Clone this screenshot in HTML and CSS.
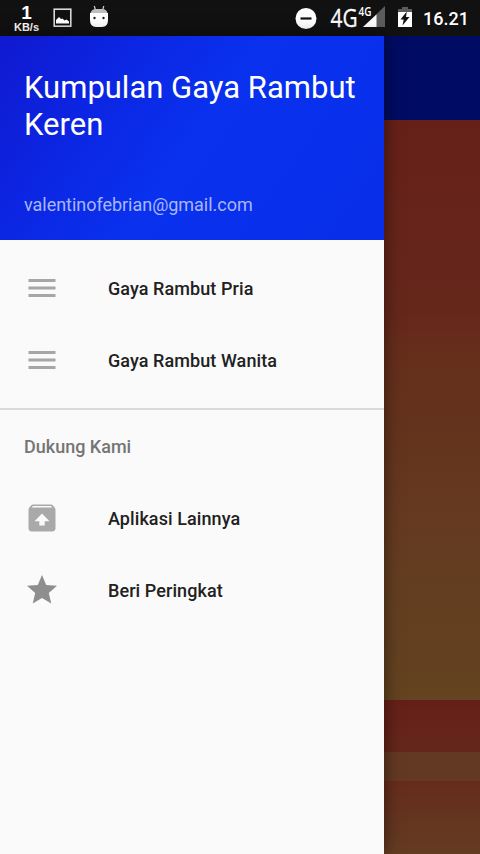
FILE: index.html
```html
<!DOCTYPE html>
<html lang="id">
<head>
<meta charset="utf-8">
<title>Kumpulan Gaya Rambut Keren</title>
<link rel="stylesheet" href="styles.css">
</head>
<body>
<header class="status">
  <div class="speed"><span class="speed-value">1</span><span class="speed-unit">KB/s</span></div>
  <svg class="picture" width="20" height="20" viewBox="0 0 20 20"><rect x="1.2" y="1.2" width="16.6" height="17" fill="none" stroke="#d8dad8" stroke-width="1.6"/><path d="M3 15.500V12l3-3 2 2 1.500-.5 2 2 2-1 2.500 2v2z" fill="#fff"/></svg>
  <svg class="robot" width="20" height="24" viewBox="0 0 20 24"><path d="M5.300 1l1.200 4M14.800 1l-1.200 4" stroke="#ccc" stroke-width="1.200"/><path d="M1.500 8.500Q2 4 7 4h6q5 0 5.500 4.500z" fill="#bdbdbd"/><path d="M1 8h18v7q0 7-6 7H7q-6 0-6-7z" fill="#fff"/><circle cx="5.500" cy="13" r="1.200" fill="#222"/><circle cx="14.500" cy="13" r="1.200" fill="#222"/></svg>
  <span class="spacer"></span>
  <svg class="dnd" width="22" height="22" viewBox="0 0 22 22"><circle cx="11" cy="10.500" r="10.500" fill="#fff"/><path d="M5.500 10.500h11" stroke="#111" stroke-width="2.200"/></svg>
  <svg class="signal" width="56" height="26" viewBox="0 0 56 26"><path d="M55 1v21H33z" fill="#5c5c5c"/><path d="M46.500 9.500V22H33z" fill="#fff"/><text class="net" x="0.500" y="22" textLength="27" lengthAdjust="spacingAndGlyphs">4G</text><text class="net-small" x="28.500" y="10.500" textLength="13" lengthAdjust="spacingAndGlyphs">4G</text></svg>
  <svg class="battery" width="16" height="22" viewBox="0 0 16 22"><path d="M1 6V3h4V1h6v2h4v3z" fill="#5c5c5c"/><path d="M1 6h14v15H1z" fill="#fff"/><path d="M9.800 5.500L3.500 13.500h3.200L5.500 19.500 12.500 11H9z" fill="#111"/></svg>
  <time class="clock">16.21</time>
</header>
<main class="screen">
  <aside class="drawer">
    <section class="account">
      <h1>Kumpulan Gaya Rambut Keren</h1>
      <p>valentinofebrian@gmail.com</p>
    </section>
    <nav>
      <ul class="menu">
        <li><svg class="icon" viewBox="0 0 36 36"><path d="M4.500 10.500h27M4.500 18h27M4.500 25.500h27" stroke="#a6a6a6" stroke-width="3"/></svg>Gaya Rambut Pria</li>
        <li><svg class="icon" viewBox="0 0 36 36"><path d="M4.500 10.500h27M4.500 18h27M4.500 25.500h27" stroke="#a6a6a6" stroke-width="3"/></svg>Gaya Rambut Wanita</li>
      </ul>
      <h2>Dukung Kami</h2>
      <ul class="menu">
        <li><svg class="icon" viewBox="0 0 24 24"><path fill="#a9a9a9" fill-rule="evenodd" d="M20.550 5.220l-1.390-1.680C18.880 3.210 18.470 3 18 3H6c-.47 0-.88.210-1.150.550L3.460 5.220C3.170 5.570 3 6.010 3 6.500V19c0 1.100.890 2 2 2h14c1.100 0 2-.9 2-2V6.500c0-.49-.17-.93-.45-1.280zM12 9l5 5.200h-3.200V17h-3.600v-2.800H7zM5.120 5l.82-1h12l.93 1z"/></svg>Aplikasi Lainnya</li>
        <li><svg class="icon" viewBox="0 0 24 24"><path fill="#8e8e8e" d="M12 17.270L18.180 21l-1.640-7.030L22 9.240l-7.190-.61L12 2 9.190 8.630 2 9.240l5.460 4.730L5.820 21z"/></svg>Beri Peringkat</li>
      </ul>
    </nav>
  </aside>
  <div class="backdrop"><div class="toolbar"></div><div class="card"></div><div class="card-next"></div><div class="band"></div><div class="last"></div></div>
</main>
</body>
</html>
```
FILE: styles.css
```css
* { box-sizing: border-box; }
body { margin: 0; width: 480px; height: 854px; overflow: hidden; font-family: Roboto, "Liberation Sans", sans-serif; background: #fafafa; }
h1, h2, p, ul { margin: 0; padding: 0; }
svg { display: block; flex: none; }
.status { height: 36px; display: flex; align-items: flex-start; background: #111; color: #fff; }
.speed { width: 27px; margin: 3px 0 0 13px; display: flex; flex-direction: column; align-items: center; font-family: "Liberation Sans", sans-serif; font-weight: 700; }
.speed-value { font-size: 19px; line-height: 19px; }
.speed-unit { font-size: 11px; line-height: 11px; }
.picture { margin: 8px 0 0 13px; }
.robot { margin: 5px 0 0 16px; }
.spacer { flex: 1; }
.dnd { margin: 8px 13px 0 0; }
.signal { margin: 5px 11px 0 0; overflow: visible; }
.net { font: 400 25px "Open Sans", Roboto, sans-serif; fill: #fff; stroke: #fff; stroke-width: .3px; }
.net-small { font: 600 12px "Open Sans", Roboto, sans-serif; fill: #fff; }
.battery { margin: 6px 10px 0 0; }
.clock { width: 57px; padding-top: 8px; font-size: 18px; line-height: 21px; font-weight: 500; }
.screen { display: grid; grid-template-columns: 384px 96px; height: 818px; }
.drawer { background: #fafafa; position: relative; box-shadow: 0 0 16px rgba(0, 0, 0, .5); }
.account { height: 204px; padding: 33px 20px 24px 24px; display: flex; flex-direction: column; justify-content: space-between; color: #fff; background: linear-gradient(125deg, #1019cf 0%, #0c25e2 25%, #0931ee 50%, #082ee9 100%); }
h1 { font-size: 31px; line-height: 37px; font-weight: 400; }
.account p { font-size: 18px; line-height: 22px; color: #a9b7fa; letter-spacing: -.03px; }
.menu { list-style: none; padding: 12px 0; }
.menu li { height: 72px; display: flex; align-items: center; padding-left: 24px; gap: 48px; font-size: 18px; font-weight: 500; letter-spacing: .08px; color: #212121; }
.icon { width: 36px; height: 36px; }
h2 { height: 74px; padding: 0 24px; border-top: 2px solid #dadada; font-size: 18px; line-height: 73px; font-weight: 500; color: #757575; }
h2 + .menu { padding-top: 0; }
.backdrop { display: grid; grid-template-rows: 84px 580px 52px 29px 73px; }
.toolbar { background: #000b63; }
.card { background: linear-gradient(#662018, #66271b 33%, #652e1b 40%, #643d21 77%, #634320); }
.card-next { background: linear-gradient(#661f18, #65271b); }
.band { background: #643923; }
.last { background: linear-gradient(#662c1c, #643c22); }
```
